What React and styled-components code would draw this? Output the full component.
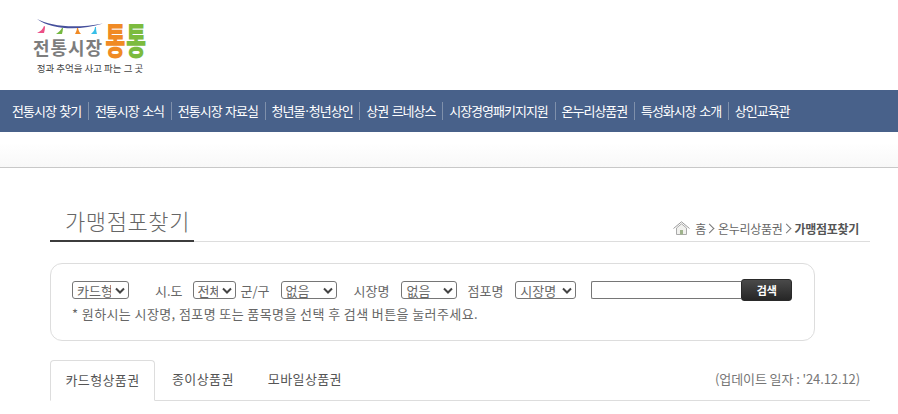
import React from 'react';
import styled, { createGlobalStyle } from 'styled-components';

const KR = `'Noto Sans CJK KR', 'Liberation Sans', sans-serif`;

const GlobalStyle = createGlobalStyle`
  html, body {
    margin: 0;
    padding: 0;
    height: 414px;
    overflow: hidden;
    background: #fff;
    font-family: ${KR};
  }
`;

const NavDot = styled.span`
  margin: 0 -1px;
`;

const menus = [
  '전통시장 찾기',
  '전통시장 소식',
  '전통시장 자료실',
  <>
    청년몰<NavDot>·</NavDot>청년상인
  </>,
  '상권 르네상스',
  '시장경영패키지지원',
  '온누리상품권',
  '특성화시장 소개',
  '상인교육관',
];

const flags = [
  { color: '#ec4f86', d: 'M8 8 C7 11 5 13 1 15 L8 15 C8.5 13 9 11 9 8.5 Z' },
  { color: '#74b83f', d: 'M26 10 C25 12 23 14 20 16 L26 16 C26.5 14 27 12 27 10 Z' },
  { color: '#f08a24', d: 'M41 10 C41 12 40 14 39 16 L45 16 C43 14 42.5 12 42 10 Z' },
  { color: '#38bfe8', d: 'M59 9 C59 12 57 14 55 16 L61 16 C60.5 14 60 12 60 9 Z' },
];

const App = () => {
  return (
    <>
      <GlobalStyle />
      <Header>
        <Logo>
          <LogoLeft>
            <svg viewBox="0 0 68 18" width="68" height="18">
              <path d="M1 1 C14 8 38 11 67 5.5 C44 13 16 12 1 1 Z" fill="#46509c" />
              {flags.map(({ color, d }) => (
                <path key={color} d={d} fill={color} />
              ))}
            </svg>
            <LogoGray>전통시장</LogoGray>
          </LogoLeft>
          <LogoBig>
            <LogoGlyph $color="#f08a24">통</LogoGlyph>
            <LogoGlyph $color="#7cbb3e">통</LogoGlyph>
          </LogoBig>
          <LogoTag>정과 추억을 사고 파는 그 곳</LogoTag>
        </Logo>
      </Header>
      <Nav>
        {menus.map((menu, i) => (
          <NavItem key={i}>{menu}</NavItem>
        ))}
      </Nav>
      <SubBand />
      <Content>
        <TitleBar>
          <Title>가맹점포찾기</Title>
          <Crumbs>
            <svg width="17" height="14" viewBox="0 0 17 14">
              <path d="M0.5 7.5 L8.5 0.8 L16.5 7.5" fill="none" stroke="#9a9a9a" />
              <path d="M3.5 7 L8.5 2.8 L13.5 7 V13.5 H3.5 Z" fill="#f1f1ee" stroke="#aaa" />
              <rect x="7" y="9" width="3" height="4.5" fill="#9fb38c" />
            </svg>
            <span>홈</span>
            <Chevron />
            <span>온누리상품권</span>
            <Chevron />
            <strong>가맹점포찾기</strong>
          </Crumbs>
        </TitleBar>
        <SearchBox>
          <SearchRow>
            <Select $width={57} $mr={26}>
              <option>카드형</option>
            </Select>
            <Label>시.도</Label>
            <Select $width={43} $ml={10} $mr={5}>
              <option>전체</option>
            </Select>
            <Label>군/구</Label>
            <Select $width={56} $ml={11} $mr={17}>
              <option>없음</option>
            </Select>
            <Label>시장명</Label>
            <Select $width={56} $ml={12} $mr={10}>
              <option>없음</option>
            </Select>
            <Label>점포명</Label>
            <Select $width={61} $ml={12} $mr={15}>
              <option>시장명</option>
            </Select>
            <Input />
            <SearchButton>검색</SearchButton>
          </SearchRow>
          <Hint>* 원하시는 시장명, 점포명 또는 품목명을 선택 후 검색 버튼을 눌러주세요.</Hint>
        </SearchBox>
        <Tabs>
          <Tab $active>카드형상품권</Tab>
          <Tab>종이상품권</Tab>
          <Tab>모바일상품권</Tab>
          <Updated>(업데이트 일자 : '24.12.12)</Updated>
        </Tabs>
      </Content>
    </>
  );
};

const Header = styled.header`
  height: 90px;
  padding: 18px 0 0 33px;
  box-sizing: border-box;
`;

const Logo = styled.div`
  width: 114px;
  display: grid;
  grid-template-columns: 72px 42px;
`;

const LogoLeft = styled.div`
  display: flex;
  flex-direction: column;
  svg {
    display: block;
    margin-left: 3px;
  }
`;

const LogoGray = styled.span`
  font-size: 18px;
  font-weight: 700;
  letter-spacing: 0.9px;
  line-height: 22px;
  color: #7d7d7d;
  white-space: nowrap;
`;

const LogoBig = styled.div`
  display: flex;
  align-items: center;
  justify-content: center;
  transform: scaleY(1.7);
`;

const LogoGlyph = styled.span`
  font-size: 22px;
  font-weight: 900;
  line-height: 24px;
  letter-spacing: 0.5px;
  color: ${({ $color }) => $color};
`;

const LogoTag = styled.div`
  grid-column: 1 / 3;
  margin-top: 4px;
  font-size: 9.5px;
  line-height: 13px;
  letter-spacing: -0.03px;
  text-align: center;
  color: #444;
  white-space: nowrap;
`;

const Nav = styled.nav`
  height: 42px;
  background: #48618a;
  display: flex;
  align-items: center;
  padding-left: 12px;
`;

const NavItem = styled.a`
  font-size: 13px;
  letter-spacing: -1px;
  word-spacing: 1.5px;
  color: #fff;
  white-space: nowrap;
  line-height: 18px;
  & + & {
    border-left: 1px solid #7f90ab;
    margin-left: 6.7px;
    padding-left: 6px;
  }
`;

const SubBand = styled.div`
  height: 35px;
  border-bottom: 1px solid #c8c8c8;
  background: linear-gradient(#fff 30%, #f8f8f8);
`;

const Content = styled.main`
  width: 820px;
  margin-left: 50px;
`;

const TitleBar = styled.div`
  height: 74px;
  box-sizing: border-box;
  border-bottom: 1px solid #ddd;
  display: flex;
  justify-content: space-between;
  align-items: flex-end;
`;

const Title = styled.h2`
  margin: 0 0 -1px;
  width: 144px;
  height: 36px;
  box-sizing: border-box;
  padding-left: 15px;
  border-bottom: 2px solid #3c3c3c;
  font-size: 22px;
  font-weight: 300;
  letter-spacing: 0.6px;
  line-height: 29px;
  color: #666;
  white-space: nowrap;
`;

const Crumbs = styled.div`
  display: flex;
  align-items: center;
  gap: 4px;
  height: 26px;
  margin-right: 11px;
  font-size: 12px;
  letter-spacing: -0.3px;
  color: #666;
  strong {
    color: #555;
    font-weight: 700;
  }
  svg {
    margin-right: 1px;
  }
`;

const Chevron = styled.i`
  width: 6px;
  height: 6px;
  margin: 0 1px 0 -4px;
  border-top: 1px solid #777;
  border-right: 1px solid #777;
  transform: rotate(45deg);
`;

const SearchBox = styled.section`
  width: 765px;
  height: 78px;
  margin-top: 21px;
  box-sizing: border-box;
  border: 1px solid #ddd;
  border-radius: 12px;
  padding: 15px 0 0 21px;
`;

const SearchRow = styled.div`
  display: flex;
  align-items: center;
  height: 22px;
`;

const Label = styled.span`
  font-size: 13px;
  color: #666;
  white-space: nowrap;
`;

const Select = styled.select`
  appearance: none;
  width: ${({ $width }) => $width}px;
  height: 18px;
  box-sizing: border-box;
  margin: 0 ${({ $mr }) => $mr || 0}px 0 ${({ $ml }) => $ml || 0}px;
  padding: 1px 17px 0 4px;
  font-family: ${KR};
  font-size: 13px;
  line-height: 15px;
  color: #666;
  border: 1px solid #767676;
  border-radius: 3px;
  background: #fff url("data:image/svg+xml,%3Csvg xmlns='http://www.w3.org/2000/svg' width='10' height='7'%3E%3Cpath d='M1 1.5l4 4 4-4' fill='none' stroke='%23444' stroke-width='2'/%3E%3C/svg%3E") no-repeat right 3px center;
`;

const Input = styled.input`
  width: 150px;
  height: 18px;
  box-sizing: border-box;
  padding: 0;
  border: 1px solid #767676;
  border-right: 0;
  border-radius: 2px 0 0 2px;
`;

const SearchButton = styled.button`
  width: 51px;
  height: 22px;
  padding: 0;
  font-family: ${KR};
  font-size: 11px;
  font-weight: 700;
  color: #fff;
  border: 1px solid #2a2a2a;
  border-radius: 3px;
  background: linear-gradient(#4a4a4a, #262626);
`;

const Hint = styled.p`
  margin: 3px 0 0;
  font-size: 13px;
  line-height: 19px;
  letter-spacing: 0.4px;
  color: #666;
`;

const Tabs = styled.div`
  height: 41px;
  margin-top: 19px;
  box-sizing: border-box;
  border-bottom: 1px solid #ddd;
  display: flex;
  align-items: stretch;
`;

const Tab = styled.div`
  width: ${({ $active }) => ($active ? '105px' : 'auto')};
  height: ${({ $active }) => ($active ? '41px' : '40px')};
  box-sizing: border-box;
  padding: ${({ $active }) => ($active ? '0' : '0 17px')};
  text-align: center;
  font-size: 13px;
  letter-spacing: 0.4px;
  line-height: 38px;
  color: #555;
  background: ${({ $active }) => ($active ? '#fff' : 'transparent')};
  border: ${({ $active }) => ($active ? '1px solid #ddd' : '0')};
  border-bottom: ${({ $active }) => ($active ? '1px solid #fff' : '0')};
  border-radius: 4px 4px 0 0;
`;

const Updated = styled.div`
  margin-left: auto;
  padding-right: 10px;
  font-size: 13px;
  letter-spacing: -0.1px;
  line-height: 38px;
  color: #777;
`;

export default App;
